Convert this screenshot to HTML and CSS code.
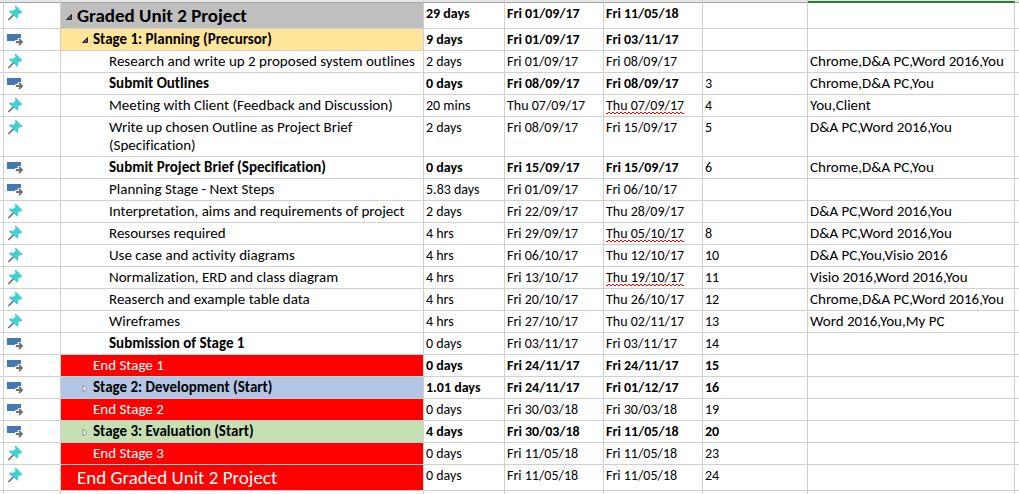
FILE: index.html
```html
<!DOCTYPE html>
<html lang="en">
<head>
<meta charset="utf-8">
<title>Graded Unit 2 Project</title>
<link rel="stylesheet" href="styles.css">
</head>
<body>
<svg class="sprite" aria-hidden="true">
  <symbol id="pin" viewBox="0 0 16 16">
    <path d="M1.4 15 7 9.4" stroke="#707070" stroke-width="1.6" fill="none"/>
    <path d="M8.6 .6 15.2 7 14.4 8.4 12.6 8.2 10.8 10.4 11.4 13 10.6 13.8 2 6.8 2.6 5.4 6.4 5.8 8.6 3.6 7.8 1.6Z" fill="#40d0d0"/>
  </symbol>
  <symbol id="auto" viewBox="0 0 17 13">
    <path d="M0 0H14V5H10.5V7H0Z" fill="#4478b4"/>
    <path d="M8 6H11V4H14V7H8Z" fill="#fff"/>
    <path d="M9 8H14.5M12 5 15 8 12 11" stroke="#707070" stroke-width="1.8" fill="none"/>
  </symbol>
  <symbol id="open" viewBox="0 0 6 6">
    <path d="M.5 5.5H5.5V.5Z" fill="#595959" stroke="#262626"/>
  </symbol>
  <symbol id="closed" viewBox="0 0 6 9">
    <path d="M1 1V8L5 4.5Z" fill="#fff" stroke="#909090"/>
  </symbol>
</svg>
<table class="sheet">
  <colgroup><col class="c-edge"><col class="c-mode"><col class="c-name"><col class="c-duration"><col class="c-date"><col class="c-date"><col class="c-pred"><col class="c-resources"><col class="c-rest"></colgroup>
  <thead aria-hidden="true"><tr><td></td><td></td><td></td><td></td><td></td><td></td><td></td><td class="selected"></td><td></td></tr></thead>
  <tbody>
    <tr class="bold"><td></td><td class="mode"><svg class="pin"><use href="#pin"/></svg></td><td class="name level-0 gray"><button class="toggle" aria-label="Collapse project"><svg class="open"><use href="#open"/></svg></button>Graded Unit 2 Project</td><td>29 days</td><td>Fri 01/09/17</td><td>Fri 11/05/18</td><td></td><td class="resources"></td><td></td></tr>
    <tr class="bold"><td></td><td class="mode"><svg class="auto"><use href="#auto"/></svg></td><td class="name level-1 yellow"><button class="toggle" aria-label="Collapse Stage 1"><svg class="open"><use href="#open"/></svg></button>Stage 1: Planning (Precursor)</td><td>9 days</td><td>Fri 01/09/17</td><td>Fri 03/11/17</td><td></td><td class="resources"></td><td></td></tr>
    <tr><td></td><td class="mode"><svg class="pin"><use href="#pin"/></svg></td><td class="name">Research and write up 2 proposed system outlines</td><td>2 days</td><td>Fri 01/09/17</td><td>Fri 08/09/17</td><td></td><td class="resources">Chrome,D&amp;A PC,Word 2016,You</td><td></td></tr>
    <tr><td></td><td class="mode"><svg class="auto"><use href="#auto"/></svg></td><td class="name bold">Submit Outlines</td><td class="bold">0 days</td><td class="bold">Fri 08/09/17</td><td class="bold">Fri 08/09/17</td><td>3</td><td class="resources">Chrome,D&amp;A PC,You</td><td></td></tr>
    <tr><td></td><td class="mode"><svg class="pin"><use href="#pin"/></svg></td><td class="name">Meeting with Client (Feedback and Discussion)</td><td>20 mins</td><td>Thu 07/09/17</td><td><span class="flagged">Thu 07/09/17</span></td><td>4</td><td class="resources">You,Client</td><td></td></tr>
    <tr><td></td><td class="mode"><svg class="pin"><use href="#pin"/></svg></td><td class="name">Write up chosen Outline as Project Brief (Specification)</td><td>2 days</td><td>Fri 08/09/17</td><td>Fri 15/09/17</td><td>5</td><td class="resources">D&amp;A PC,Word 2016,You</td><td></td></tr>
    <tr><td></td><td class="mode"><svg class="auto"><use href="#auto"/></svg></td><td class="name bold">Submit Project Brief (Specification)</td><td class="bold">0 days</td><td class="bold">Fri 15/09/17</td><td class="bold">Fri 15/09/17</td><td>6</td><td class="resources">Chrome,D&amp;A PC,You</td><td></td></tr>
    <tr><td></td><td class="mode"><svg class="auto"><use href="#auto"/></svg></td><td class="name">Planning Stage - Next Steps</td><td>5.83 days</td><td>Fri 01/09/17</td><td>Fri 06/10/17</td><td></td><td class="resources"></td><td></td></tr>
    <tr><td></td><td class="mode"><svg class="pin"><use href="#pin"/></svg></td><td class="name">Interpretation, aims and requirements of project</td><td>2 days</td><td>Fri 22/09/17</td><td>Thu 28/09/17</td><td></td><td class="resources">D&amp;A PC,Word 2016,You</td><td></td></tr>
    <tr><td></td><td class="mode"><svg class="pin"><use href="#pin"/></svg></td><td class="name">Resourses required</td><td>4 hrs</td><td>Fri 29/09/17</td><td><span class="flagged">Thu 05/10/17</span></td><td>8</td><td class="resources">D&amp;A PC,Word 2016,You</td><td></td></tr>
    <tr><td></td><td class="mode"><svg class="pin"><use href="#pin"/></svg></td><td class="name">Use case and activity diagrams</td><td>4 hrs</td><td>Fri 06/10/17</td><td>Thu 12/10/17</td><td>10</td><td class="resources">D&amp;A PC,You,Visio 2016</td><td></td></tr>
    <tr><td></td><td class="mode"><svg class="pin"><use href="#pin"/></svg></td><td class="name">Normalization, ERD and class diagram</td><td>4 hrs</td><td>Fri 13/10/17</td><td><span class="flagged">Thu 19/10/17</span></td><td>11</td><td class="resources">Visio 2016,Word 2016,You</td><td></td></tr>
    <tr><td></td><td class="mode"><svg class="pin"><use href="#pin"/></svg></td><td class="name">Reaserch and example table data</td><td>4 hrs</td><td>Fri 20/10/17</td><td>Thu 26/10/17</td><td>12</td><td class="resources">Chrome,D&amp;A PC,Word 2016,You</td><td></td></tr>
    <tr><td></td><td class="mode"><svg class="pin"><use href="#pin"/></svg></td><td class="name">Wireframes</td><td>4 hrs</td><td>Fri 27/10/17</td><td>Thu 02/11/17</td><td>13</td><td class="resources">Word 2016,You,My PC</td><td></td></tr>
    <tr><td></td><td class="mode"><svg class="auto"><use href="#auto"/></svg></td><td class="name bold">Submission of Stage 1</td><td>0 days</td><td>Fri 03/11/17</td><td>Fri 03/11/17</td><td>14</td><td class="resources"></td><td></td></tr>
    <tr class="bold"><td></td><td class="mode"><svg class="auto"><use href="#auto"/></svg></td><td class="name level-1 red">End Stage 1</td><td>0 days</td><td>Fri 24/11/17</td><td>Fri 24/11/17</td><td>15</td><td class="resources"></td><td></td></tr>
    <tr class="bold"><td></td><td class="mode"><svg class="auto"><use href="#auto"/></svg></td><td class="name level-1 blue"><button class="toggle" aria-label="Expand Stage 2"><svg class="closed"><use href="#closed"/></svg></button>Stage 2: Development (Start)</td><td>1.01 days</td><td>Fri 24/11/17</td><td>Fri 01/12/17</td><td>16</td><td class="resources"></td><td></td></tr>
    <tr><td></td><td class="mode"><svg class="auto"><use href="#auto"/></svg></td><td class="name level-1 red">End Stage 2</td><td>0 days</td><td>Fri 30/03/18</td><td>Fri 30/03/18</td><td>19</td><td class="resources"></td><td></td></tr>
    <tr class="bold"><td></td><td class="mode"><svg class="auto"><use href="#auto"/></svg></td><td class="name level-1 green"><button class="toggle" aria-label="Expand Stage 3"><svg class="closed"><use href="#closed"/></svg></button>Stage 3: Evaluation (Start)</td><td>4 days</td><td>Fri 30/03/18</td><td>Fri 11/05/18</td><td>20</td><td class="resources"></td><td></td></tr>
    <tr><td></td><td class="mode"><svg class="pin"><use href="#pin"/></svg></td><td class="name level-1 red">End Stage 3</td><td>0 days</td><td>Fri 11/05/18</td><td>Fri 11/05/18</td><td>23</td><td class="resources"></td><td></td></tr>
    <tr><td></td><td class="mode"><svg class="pin"><use href="#pin"/></svg></td><td class="name level-0 red">End Graded Unit 2 Project</td><td>0 days</td><td>Fri 11/05/18</td><td>Fri 11/05/18</td><td>24</td><td class="resources"></td><td></td></tr>
    <tr class="blank"><td></td><td></td><td></td><td></td><td></td><td></td><td></td><td></td><td></td></tr>
  </tbody>
</table>
</body>
</html>
```
FILE: styles.css
```css
body {
  margin: 0;
  height: 100vh;
  overflow: hidden;
  background: #fff;
  color: #000;
  font: 14px/18px Carlito, Lato, sans-serif;
  font-variant-ligatures: none;
}

.sprite {
  position: absolute;
  width: 0;
  height: 0;
}

.sheet {
  width: 100%;
  table-layout: fixed;
  border-collapse: separate;
  border-spacing: 0;
}

.c-edge { width: 4px; }
.c-mode { width: 57px; }
.c-duration { width: 81px; }
.c-date { width: 99px; }
.c-pred { width: 105px; }
.c-resources { width: 207px; }
.c-rest { width: 4px; }

.sheet td {
  box-sizing: border-box;
  padding: 2px 0 1px 2px;
  border-right: 1px solid #d0d0d0;
  border-bottom: 1px solid #d0d0d0;
  vertical-align: top;
}

.sheet td:first-child,
.sheet td:last-child {
  padding: 0;
}

.sheet td:last-child {
  border-right: 0;
}

.sheet thead td {
  height: 3px;
  padding: 0;
  background: #e6e6e6;
  border-bottom-color: #a6a6a6;
}

.sheet thead .selected {
  border-bottom: 2px solid #2f7d32;
}

.sheet tbody td {
  height: 22px;
}

.sheet td.mode {
  padding: 2px 0 0 3px;
}

.mode svg {
  display: block;
}

.pin {
  width: 16px;
  height: 16px;
}

.auto {
  width: 17px;
  height: 13px;
  margin-top: 3px;
}

.bold {
  font-weight: bold;
}

.sheet td.name {
  padding: 1px 0 2px 48px;
  font-size: 15px;
}

.sheet td.resources {
  padding: 1px 0 2px 2px;
  font-size: 15px;
}

.sheet td.level-1 {
  padding-left: 32px;
}

.sheet td.level-0 {
  padding: 2px 0 1px 16px;
  font-size: 19px;
  line-height: 22px;
}

.toggle {
  display: inline-flex;
  align-items: center;
  width: 12px;
  height: 12px;
  margin: 0 0 0 -12px;
  padding: 0 0 0 1px;
  border: 0;
  background: none;
  vertical-align: middle;
}

.toggle svg {
  display: block;
  flex: none;
}

.open {
  width: 6px;
  height: 6px;
}

.closed {
  width: 6px;
  height: 9px;
}

.gray { background: #bfbfbf; }
.yellow { background: #ffe499; }
.blue { background: #b4c6e7; }
.green { background: #c5e0b3; }

.red {
  background: #f00;
  color: #fff;
  font-weight: normal;
}

.flagged {
  background:
    repeating-linear-gradient(90deg, #f00 0 2px, transparent 2px 4px) 0 100% / 100% 1px no-repeat,
    repeating-linear-gradient(90deg, transparent 0 2px, #f00 2px 4px) 0 calc(100% - 1px) / 100% 1px no-repeat;
}

.sheet .blank td {
  padding: 0;
}
```
